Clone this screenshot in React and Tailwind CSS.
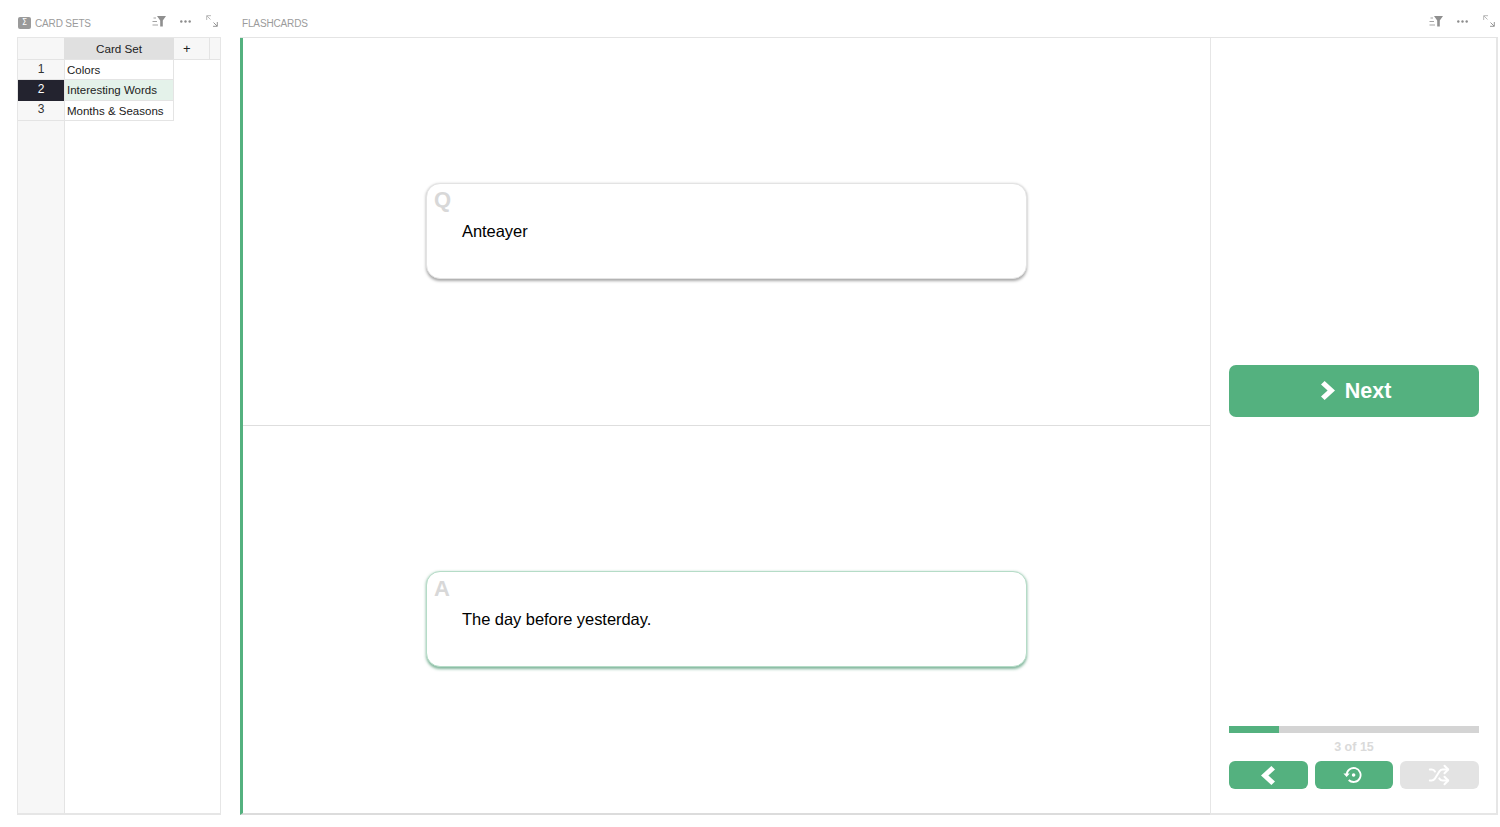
import React from "react";
import { Shuffle } from "lucide-react";

function FilterIcon() {
  return (
    <svg width="14" height="12" viewBox="0 0 14 12" className="block" fill="none">
      <path d="M5 1h9L10.8 5.6V11.5H8.2V5.6z" fill="#8f8f8f" />
      <path d="M1.5 3H4M0.5 6.5H5M0.5 10H6" stroke="#a3a3a3" strokeWidth="1" />
    </svg>
  );
}
function Dots() {
  return (
    <svg width="11" height="3" viewBox="0 0 11 3" className="block">
      <circle cx="1.3" cy="1.5" r="1.2" fill="#8c8c8c" />
      <circle cx="5.5" cy="1.5" r="1.2" fill="#8c8c8c" />
      <circle cx="9.7" cy="1.5" r="1.2" fill="#8c8c8c" />
    </svg>
  );
}
function Expand() {
  return (
    <svg width="12" height="12" viewBox="0 0 12 12" fill="none" className="block">
      <path d="M.7 5V.7H5M.9.9l3.6 3.6" stroke="#b0b0b0" strokeWidth=".9" />
      <path d="M11.3 7v4.3H7M11.1 11.1 7.5 7.5" stroke="#8a8a8a" strokeWidth=".9" />
    </svg>
  );
}
function Tools({ className }) {
  return (
    <div className={"flex items-center " + className}>
      <span className="w-[14px] flex justify-center"><FilterIcon /></span>
      <span className="ml-[14px]"><Dots /></span>
      <span className="ml-[15px]"><Expand /></span>
    </div>
  );
}
function Chevron({ dir = "right", w = 14, h = 19 }) {
  const pts = dir === "right"
    ? "3.6,0 14,9.5 3.6,19 0,15.4 6.6,9.5 0,3.6"
    : "10.4,0 0,9.5 10.4,19 14,15.4 7.4,9.5 14,3.6";
  return (
    <svg width={w} height={h} viewBox="0 0 14 19" className="block">
      <polygon points={pts} fill="#fff" />
    </svg>
  );
}
function HistoryIcon() {
  return (
    <svg width="19" height="18" viewBox="0 0 19 18" fill="none" className="block">
      <path d="M3.6 9a7 7 0 1 1 2.1 5" stroke="#fff" strokeWidth="1.8" />
      <path d="M.4 7.4h6.4L3.6 11z" fill="#fff" />
      <circle cx="10.6" cy="9" r="1.8" fill="#fff" />
    </svg>
  );
}

function Row({ n, label, selected }) {
  return (
    <div className="flex h-[20.3px]">
      <div className={"w-[46px] flex items-center justify-center text-[12px] pb-[2px] " + (selected ? "bg-[#23232f] text-white" : "text-[#333] border-b border-[#e4e4e4] bg-[#f7f7f7]")}>
        {n}
      </div>
      <div className={"w-[110px] border-l border-r border-b border-[#e4e4e4] pl-[2px] pt-[2px] flex items-center text-[11.5px] whitespace-nowrap " + (selected ? "bg-[#e4f2ea] text-[#222]" : "bg-white text-[#1a1a1a]")}>
        {label}
      </div>
    </div>
  );
}

function Card({ letter, text, border, shadow, letterTop }) {
  return (
    <div className={"w-[601px] h-[96px] rounded-[14px] bg-white border-[1.5px] relative flex items-center pl-[35px] pt-[1px] " + border + " " + shadow}>
      <span className={"absolute left-[7px] text-[22px] leading-[26px] font-bold text-[#d8d8d8] " + letterTop}>{letter}</span>
      <span className="text-[16.5px] text-black tracking-[-0.05px]">{text}</span>
    </div>
  );
}

export default function App() {
  return (
    <div className="h-[827px] w-[1500px] bg-white flex pl-[17px] pr-[2px] overflow-hidden font-['Liberation_Sans',Arial,sans-serif]">
      <div className="w-[204px] shrink-0 flex flex-col">
        <div className="h-[37px] flex items-center pt-[9px] pr-[3px]">
          <span className="ml-[1px] w-[13px] h-[12px] rounded-[2px] bg-[#9a9a9a] text-white text-[8px] leading-[12px] text-center font-['DejaVu_Sans',sans-serif]">Σ</span>
          <span className="ml-[4px] text-[10px] tracking-[-0.15px] text-[#9b9b9b]">CARD SETS</span>
          <Tools className="ml-auto -mt-[4px]" />
        </div>
        <div className="h-[778px] border border-b-2 border-[#e6e6e6] flex relative">
          <div className="flex flex-col w-full">
            <div className="flex h-[22px] shrink-0 bg-[#f7f7f7] border-b border-[#e4e4e4]">
              <div className="w-[46px]" />
              <div className="w-[110px] bg-[#e0e0e0] flex items-center justify-center pt-[1px] text-[11.7px] text-[#222]">Card Set</div>
              <div className="w-[36px] border-r border-[#e4e4e4] flex items-center pl-[9px] pt-[1px] text-[13px] text-[#222]">+</div>
            </div>
            <Row n="1" label="Colors" />
            <Row n="2" label="Interesting Words" selected />
            <Row n="3" label="Months & Seasons" />
            <div className="flex-1 flex">
              <div className="w-[47px] bg-[#f7f7f7] border-r border-[#e4e4e4]" />
            </div>
          </div>
        </div>
      </div>

      <div className="ml-[19px] flex-1 flex flex-col">
        <div className="h-[37px] flex items-center pt-[9px]">
          <span className="ml-[2px] text-[10px] tracking-[-0.15px] text-[#9b9b9b]">FLASHCARDS</span>
          <Tools className="ml-auto -mt-[4px] mr-[3px]" />
        </div>
        <div className="h-[778px] flex border-t border-[#e4e4e4]">
          <div className="w-[970px] shrink-0 border-l-[3px] border-[#54b17f] border-b-2 border-b-[#dcdcdc] flex flex-col">
            <div className="h-[388px] border-b border-[#dedede] flex items-center justify-center pb-[2px]">
              <Card letter="Q" text="Anteayer" letterTop="top-[3px]" border="border-[#e3e3e3]" shadow="shadow-[0_1.5px_3px_rgba(0,0,0,0.35)]" />
            </div>
            <div className="flex-1 flex items-center justify-center pb-[2px]">
              <Card letter="A" text="The day before yesterday." letterTop="top-[4px]" border="border-[#b5dcc7]" shadow="shadow-[0_1.5px_3px_rgba(40,130,85,0.6)]" />
            </div>
          </div>
          <div className="flex-1 border-l border-r-2 border-b-2 border-[#e6e6e6] pl-[18px] pr-[17px] pb-[24px] flex flex-col">
            <div className="flex-1 flex items-center pt-[17px]">
              <button className="w-full h-[52px] rounded-[7px] bg-[#54b17f] text-white flex items-center justify-center gap-[10px] pl-[4px] text-[21.5px] font-bold">
                <Chevron dir="right" />
                <span className="pt-[2px]">Next</span>
              </button>
            </div>
            <div className="h-[7px] bg-[#d4d4d4] flex shrink-0">
              <div className="w-[50px] bg-[#54b17f]" />
            </div>
            <div className="h-[28px] flex items-center justify-center text-[12.5px] font-bold text-[#dadada]">3 of 15</div>
            <div className="grid grid-cols-3 gap-[7px]">
              <button className="h-[28px] rounded-[6px] bg-[#54b17f] flex items-center justify-center"><Chevron dir="left" /></button>
              <button className="h-[28px] rounded-[6px] bg-[#54b17f] flex items-center justify-center pr-[2px]"><HistoryIcon /></button>
              <button className="h-[28px] rounded-[6px] bg-[#e3e3e3] flex items-center justify-center pr-[1px]"><Shuffle size={22} strokeWidth={2.2} color="#ffffff" /></button>
            </div>
          </div>
        </div>
      </div>
    </div>
  );
}
